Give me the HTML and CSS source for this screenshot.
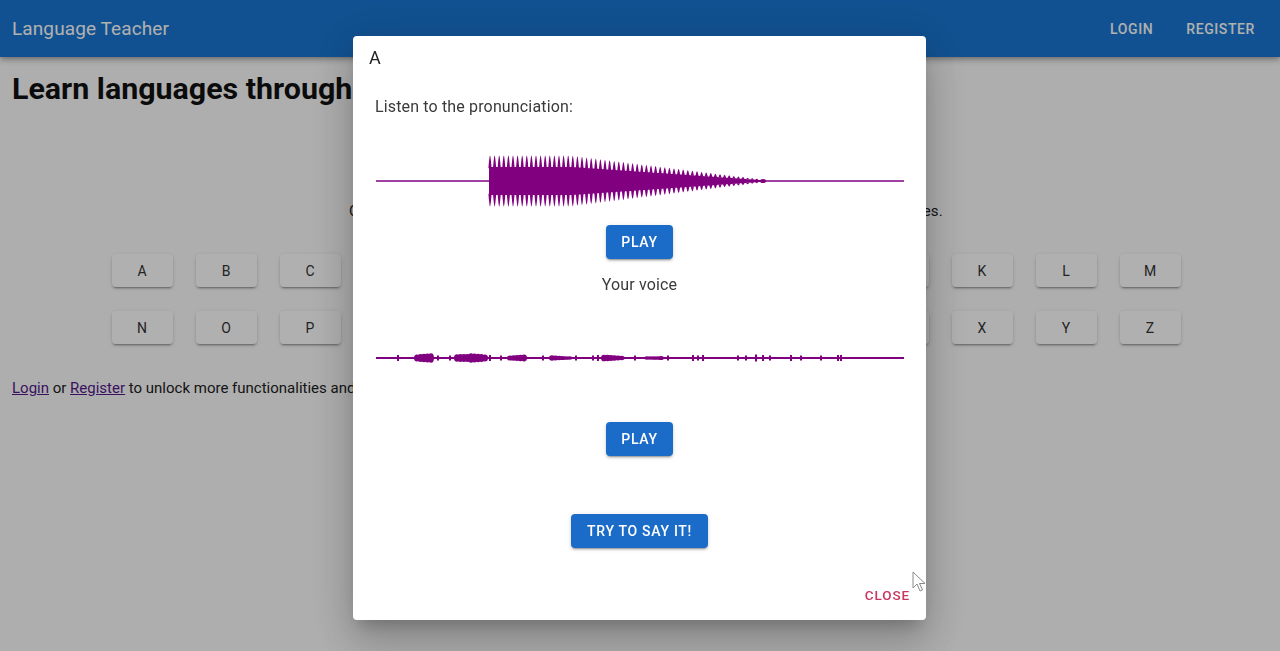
FILE: index.html
```html
<!DOCTYPE html>
<html lang="en">
<head>
<meta charset="utf-8">
<title>Language Teacher</title>
<link rel="stylesheet" href="styles.css">
</head>
<body>
<header class="appbar">
  <div class="brand">Language Teacher</div>
  <nav class="nav">
    <a class="nav-btn" href="#">LOGIN</a>
    <a class="nav-btn" href="#">REGISTER</a>
  </nav>
</header>
<main class="page">
  <h1 class="headline">Learn languages through pronunciation</h1>
  <p class="intro">Click on a letter to listen to how it is pronounced and try to repeat it in other languages.</p>
  <div class="letters">
    <button class="letter">A</button><button class="letter">B</button><button class="letter">C</button><button class="letter">D</button><button class="letter">E</button><button class="letter">F</button><button class="letter">G</button><button class="letter">H</button><button class="letter">I</button><button class="letter">J</button><button class="letter">K</button><button class="letter">L</button><button class="letter">M</button>
    <button class="letter">N</button><button class="letter">O</button><button class="letter">P</button><button class="letter">Q</button><button class="letter">R</button><button class="letter">S</button><button class="letter">T</button><button class="letter">U</button><button class="letter">V</button><button class="letter">W</button><button class="letter">X</button><button class="letter">Y</button><button class="letter">Z</button>
  </div>
  <p class="cta"><a class="link" href="#">Login</a> or <a class="link" href="#">Register</a> to unlock more functionalities and keep track of your progress.</p>
</main>

<div class="backdrop">
  <div class="dialog">
    <div class="dialog-title">A</div>
    <p class="dialog-text">Listen to the pronunciation:</p>
    <svg class="wave" id="wave1" width="528" height="80" viewBox="0 0 528 80"></svg>
    <button class="btn-contained">PLAY</button>
    <p class="dialog-label">Your voice</p>
    <svg class="wave" id="wave2" width="528" height="80" viewBox="0 0 528 80"></svg>
    <button class="btn-contained btn-play2">PLAY</button>
    <button class="btn-contained btn-try">TRY TO SAY IT!</button>
    <div class="dialog-actions">
      <button class="btn-text">CLOSE</button>
    </div>
  </div>
</div>

<svg class="cursor" width="14" height="22" viewBox="0 0 14 22">
  <path d="M1 1 L1 17 L5 13 L8 20 L10.5 19 L7.5 12.5 L13 12.5 Z" fill="#fff" fill-opacity="0.6" stroke="#8a8a8a" stroke-width="1"/>
</svg>
<script src="script.js"></script>
</body>
</html>
```

FILE: styles.css
```css
* { box-sizing: border-box; }
html, body { margin: 0; padding: 0; }
body {
  font-family: Roboto, "Liberation Sans", Arial, sans-serif;
  background: #fdfdfd;
  color: #212121;
  width: 1280px;
  height: 651px;
  overflow: hidden;
}
.appbar {
  height: 57px;
  background: #1976d2;
  color: #fff;
  display: flex;
  align-items: center;
  justify-content: space-between;
  padding: 0 25px 0 12px;
  box-shadow: 0 2px 4px -1px rgba(0,0,0,.2), 0 4px 5px 0 rgba(0,0,0,.14), 0 1px 10px 0 rgba(0,0,0,.12);
}
.brand { font-size: 19px; font-weight: 400; letter-spacing: 0.1px; }
.nav { display: flex; gap: 33px; }
.nav-btn {
  color: #fff; text-decoration: none;
  font-size: 14px; font-weight: 500; letter-spacing: 0.6px;
}
.page { padding-left: 12px; }
.headline {
  margin: 14px 0 0;
  font-size: 30.4px; line-height: 36px; font-weight: 700;
  color: #111;
}
.intro {
  margin: 93px 0 0;
  text-align: center;
  font-size: 15px; line-height: 22px;
  letter-spacing: 0.2px;
}
.letters {
  margin-top: 32px;
  display: grid;
  grid-template-columns: repeat(13, 61px);
  column-gap: 23px;
  row-gap: 24px;
  justify-content: center;
}
.letter {
  height: 33px;
  border: none;
  border-radius: 4px;
  background: #fff;
  font-family: inherit;
  font-size: 14px; font-weight: 400;
  color: #333;
  box-shadow: 0 3px 1px -2px rgba(0,0,0,.2), 0 2px 2px 0 rgba(0,0,0,.14), 0 1px 5px 0 rgba(0,0,0,.12);
}
.cta {
  margin: 33px 0 0;
  font-size: 15px; line-height: 22px;
}
.link { color: #551a8b; }

.backdrop {
  position: fixed;
  inset: 0;
  background: rgba(0,0,0,0.31);
  display: flex;
  align-items: flex-start;
  justify-content: center;
  padding-top: 36px;
}
.dialog {
  width: 573px;
  height: 584px;
  margin-left: -1px;
  background: #fff;
  border-radius: 4px;
  box-shadow: 0 11px 15px -7px rgba(0,0,0,.2), 0 24px 38px 3px rgba(0,0,0,.14), 0 9px 46px 8px rgba(0,0,0,.12);
  display: flex;
  flex-direction: column;
  align-items: center;
}
.dialog-title {
  align-self: stretch;
  height: 44px;
  padding: 10px 16px 0;
  font-size: 18px; line-height: 24px;
  color: #222;
}
.dialog-text {
  align-self: stretch;
  margin: 16px 0 0;
  padding: 0 22px;
  font-size: 16px; line-height: 22px;
  color: #3a3a3a;
  letter-spacing: 0.15px;
}
.wave { display: block; margin-top: 22px; }
#wave1 { margin-top: 23px; }
#wave2 { margin-top: 22px; }
.btn-contained {
  margin-top: 4px;
  height: 34px;
  padding: 0 15px;
  border: none;
  border-radius: 4px;
  background: #1b6bc8;
  color: #fff;
  font-family: inherit;
  font-size: 14px; font-weight: 500; letter-spacing: 0.7px;
  box-shadow: 0 3px 1px -2px rgba(0,0,0,.2), 0 2px 2px 0 rgba(0,0,0,.14), 0 1px 5px 0 rgba(0,0,0,.12);
}
.btn-play2 { margin-top: 24px; }
.btn-try { margin-top: 58px; padding: 0 16px; }
.dialog-label {
  margin: 15px 0 0;
  font-size: 16px; line-height: 22px;
  color: #3a3a3a;
  letter-spacing: 0.15px;
}
.dialog-actions {
  align-self: stretch;
  display: flex;
  justify-content: flex-end;
  margin-top: 29px;
  padding-right: 8px;
}
.btn-text {
  height: 36px;
  padding: 0 8px;
  border: none;
  background: transparent;
  color: #c8355f;
  font-family: inherit;
  font-size: 13.5px; font-weight: 500; letter-spacing: 0.9px;
}
.cursor {
  position: fixed;
  left: 912px;
  top: 571px;
}
```

FILE: script.js
```js
(function () {
  var NS = 'http://www.w3.org/2000/svg';
  var PURPLE = '#800080';
  function el(name, attrs, parent) {
    var e = document.createElementNS(NS, name);
    for (var k in attrs) e.setAttribute(k, attrs[k]);
    parent.appendChild(e);
    return e;
  }
  // Wave 1: pronunciation
  var w1 = document.getElementById('wave1');
  el('line', { x1: 0, y1: 40, x2: 528, y2: 40, stroke: PURPLE, 'stroke-width': 1.6 }, w1);
  var x0 = 113, x1 = 387, L = x1 - x0;
  function amp(x) {
    var t = (x - x0) / L;
    if (t < 0.3) return 25.5;
    return Math.max(1.5, 25.5 * (1 - (t - 0.3) / 0.74));
  }
  var top = [], bot = [];
  for (var x = x0; x <= x1; x += 1) {
    var a = amp(x) * 0.55;
    top.push(x + ',' + (40 - a).toFixed(2));
    bot.unshift(x + ',' + (40 + a).toFixed(2));
  }
  var d = 'M' + top.join(' L') + ' L' + bot.join(' L') + ' Z';
  var spikes = '';
  for (var s = x0 + 1; s < x1 - 2; s += 4.6) {
    var A = amp(s);
    var m = A * 0.5;
    spikes += 'M' + (s - 1.6).toFixed(2) + ',' + (40 - m).toFixed(2) +
      ' Q' + (s - 0.6).toFixed(2) + ',' + (40 - A).toFixed(2) + ' ' + s.toFixed(2) + ',' + (40 - A).toFixed(2) +
      ' Q' + (s + 0.6).toFixed(2) + ',' + (40 - A).toFixed(2) + ' ' + (s + 1.6).toFixed(2) + ',' + (40 - m).toFixed(2) + ' Z ';
    spikes += 'M' + (s - 1.6).toFixed(2) + ',' + (40 + m).toFixed(2) +
      ' Q' + (s - 0.6).toFixed(2) + ',' + (40 + A).toFixed(2) + ' ' + s.toFixed(2) + ',' + (40 + A).toFixed(2) +
      ' Q' + (s + 0.6).toFixed(2) + ',' + (40 + A).toFixed(2) + ' ' + (s + 1.6).toFixed(2) + ',' + (40 + m).toFixed(2) + ' Z ';
  }
  el('path', { d: d, fill: PURPLE }, w1);
  el('path', { d: spikes, fill: PURPLE }, w1);
  el('ellipse', { cx: x1, cy: 40, rx: 3, ry: 2, fill: PURPLE }, w1);

  // Wave 2: recorded voice
  var w2 = document.getElementById('wave2');
  el('line', { x1: 0, y1: 40, x2: 528, y2: 40, stroke: PURPLE, 'stroke-width': 2 }, w2);
  var off = 375;
  var blobs = [
    [416, 432, 5], [456, 470, 4], [470, 484, 5], [509, 524, 4.5],
    [551, 570, 3], [603, 622, 3.5], [646, 663, 3]
  ];
  blobs.forEach(function (b) {
    for (var x = b[0]; x <= b[1]; x += 3.5) {
      var r = b[2] * (0.78 + 0.22 * Math.sin(x * 1.7));
      el('ellipse', { cx: x - off, cy: 40, rx: 3, ry: r.toFixed(2), fill: PURPLE }, w2);
    }
  });
  var ticks = [[397, 3], [437, 2.5], [449, 2.5], [489, 3], [500, 2.5], [542, 2.5], [575, 2.5],
    [592, 2.5], [597, 3], [634, 2.5], [667, 2.5], [692, 3], [697, 2.5], [702, 3],
    [737, 2.5], [745, 2.5], [755, 3.5], [762, 3], [769, 2.5], [790, 3], [800, 2.5],
    [820, 2.5], [837, 3], [840, 3]];
  ticks.forEach(function (t) {
    el('rect', { x: t[0] - off - 1, y: 40 - t[1], width: 2, height: t[1] * 2, fill: PURPLE }, w2);
  });
})();
```
